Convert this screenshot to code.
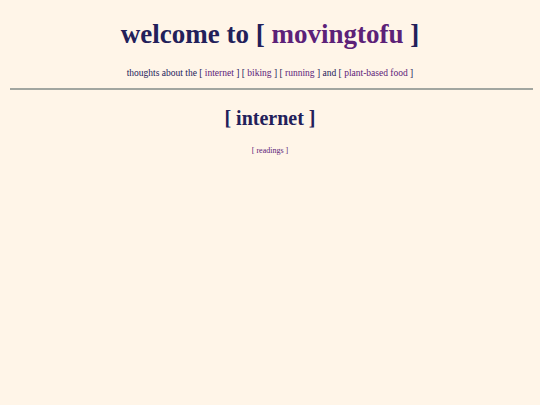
export default function App() {
  return (
    <div className="min-h-[405px] bg-[#fff5e8] text-[#22205a] pt-[14px] font-['Liberation_Serif','Times_New_Roman',serif]">
      <h1 className="text-center text-[27px] font-bold leading-[40px] font-['Liberation_Serif','Times_New_Roman',serif]">
        welcome to [ <a className="text-[#5c2178]">movingtofu</a> ]
      </h1>
      <p className="text-center text-[9.5px] mt-[12px] leading-[14px] font-['Liberation_Serif','Times_New_Roman',serif]">
        thoughts about the [ <a className="text-[#5c2178]">internet</a> ] [ <a className="text-[#5c2178]">biking</a> ] [ <a className="text-[#5c2178]">running</a> ] and [ <a className="text-[#5c2178]">plant-based food</a> ]
      </p>
      <div className="ml-[10px] mr-[7px] mt-[8px] h-[2px] bg-[#a2a6a0]" />
      <h2 className="text-center text-[20px] font-bold leading-[28px] mt-[14px] font-['Liberation_Serif','Times_New_Roman',serif]">[ internet ]</h2>
      <p className="text-center text-[8px] mt-[13px] leading-[12px] text-[#5c2178] font-['Liberation_Serif','Times_New_Roman',serif]">
        [ <a className="text-[#5c2178]">readings</a> ]
      </p>
    </div>
  );
}
